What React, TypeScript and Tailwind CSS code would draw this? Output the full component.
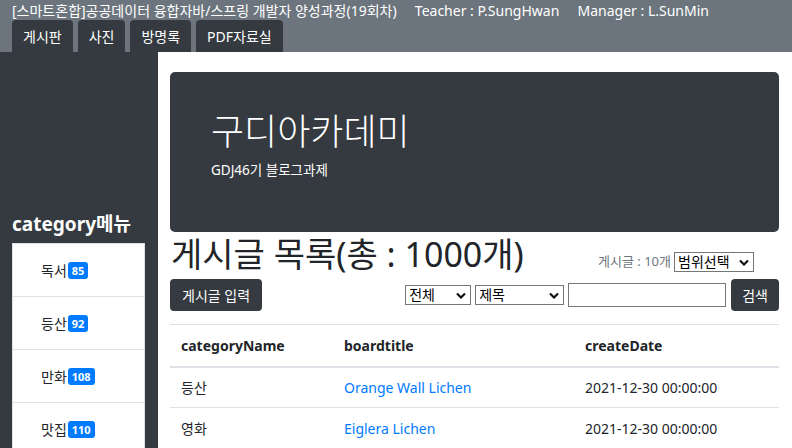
import React from 'react';

const font = { fontFamily: '"Noto Sans", "Noto Sans CJK KR", sans-serif' };

const categories = [
  { name: '독서', count: 85 },
  { name: '등산', count: 92 },
  { name: '만화', count: 108 },
  { name: '맛집', count: 110 },
];

const rows = [
  { category: '등산', title: 'Orange Wall Lichen', date: '2021-12-30 00:00:00' },
  { category: '영화', title: 'Eiglera Lichen', date: '2021-12-30 00:00:00' },
];

const Chevron: React.FC = () => (
  <svg width="10" height="7" viewBox="0 0 10 7" className="shrink-0">
    <path d="M1 1.5 L5 5.5 L9 1.5" fill="none" stroke="#111" strokeWidth="2.2" />
  </svg>
);

const FakeSelect: React.FC<{ label: string; width: string }> = ({ label, width }) => (
  <div className={`flex items-center justify-between border border-[#767676] bg-white pl-[3px] pr-[4px] h-[20px] text-[14px] text-black ${width}`}>
    <span className="leading-none">{label}</span>
    <Chevron />
  </div>
);

export default function App() {
  return (
    <div className="w-[792px] h-[448px] overflow-hidden bg-white text-[#212529]" style={font}>
      <header className="bg-[#6c757d] h-[52px] px-[12px] pt-[1px]">
        <div className="text-white text-[14px] leading-[19px] whitespace-pre">
          [스마트혼합]공공데이터 융합자바/스프링 개발자 양성과정(19회차)     Teacher : P.SungHwan     Manager : L.SunMin
        </div>
        <nav className="flex gap-[5px]">
          {['게시판', '사진', '방명록', 'PDF자료실'].map((t) => (
            <div key={t} className="bg-[#343a40] text-white text-[14px] h-[32px] px-[11px] flex items-center rounded-t-[4px]">
              {t}
            </div>
          ))}
        </nav>
      </header>

      <div className="flex h-[396px]">
        <aside className="w-[158px] shrink-0 bg-[#343a40] px-[12px] pt-[160px]">
          <h2 className="text-white font-bold text-[19px] leading-[24px] mb-[7px]">category메뉴</h2>
          <ul className="w-[133px] bg-white border border-[#dee2e6]">
            {categories.map((c) => (
              <li key={c.name} className="h-[53px] flex items-center pl-[28px] border-b border-[#dee2e6] text-[14px]">
                <span>{c.name}</span>
                <span className="ml-[1px] bg-[#007bff] text-white text-[11px] font-bold leading-none rounded-[3px] px-[4px] py-[3px]">{c.count}</span>
              </li>
            ))}
          </ul>
        </aside>

        <main className="flex-1 pl-[12px] pr-[13px] pt-[20px]">
          <section className="bg-[#343a40] rounded-[5px] h-[160px] px-[41px] pt-[38px]">
            <h1 className="text-white text-[36px] leading-[44px] font-light">구디아카데미</h1>
            <p className="text-white text-[13.5px] mt-[6px]">GDJ46기 블로그과제</p>
          </section>

          <div className="flex items-end justify-between mt-[2px]">
            <h2 className="text-[34px] leading-[40px] pl-[1px]">게시글 목록(총 : 1000개)</h2>
            <div className="flex items-center gap-[3px] mb-[2px] mr-[25px]">
              <span className="text-[13px] text-[#6c757d]">게시글 : 10개</span>
              <FakeSelect label="범위선택" width="w-[80px]" />
            </div>
          </div>

          <div className="flex items-center justify-between mt-[5px]">
            <button className="bg-[#343a40] text-white text-[14px] rounded-[4px] h-[32px] px-[12px]">게시글 입력</button>
            <div className="flex items-center gap-[4px]">
              <FakeSelect label="전체" width="w-[66px]" />
              <FakeSelect label="제목" width="w-[89px]" />
              <div className="w-[158px] h-[24px] border border-[#767676] bg-white" />
              <button className="bg-[#343a40] text-white text-[14px] rounded-[4px] h-[32px] px-[11px] ml-[1px]">검색</button>
            </div>
          </div>

          <table className="w-full mt-[13px] border-t border-[#dee2e6] text-[14px]">
            <thead>
              <tr className="border-b-2 border-[#dee2e6] h-[42px]">
                <th className="text-left font-bold pl-[11px] w-[174px]">categoryName</th>
                <th className="text-left font-bold w-[241px]">boardtitle</th>
                <th className="text-left font-bold">createDate</th>
              </tr>
            </thead>
            <tbody>
              {rows.map((r) => (
                <tr key={r.title} className="border-b border-[#dee2e6] h-[41px]">
                  <td className="pl-[11px]">{r.category}</td>
                  <td className="text-[#007bff]">{r.title}</td>
                  <td>{r.date}</td>
                </tr>
              ))}
            </tbody>
          </table>
        </main>
      </div>
    </div>
  );
}
